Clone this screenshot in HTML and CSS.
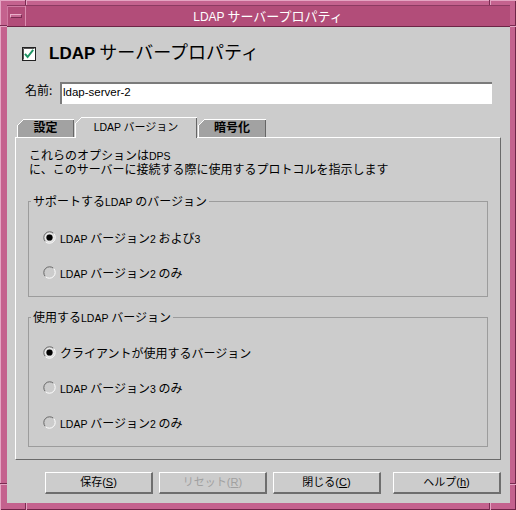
FILE: index.html
```html
<!DOCTYPE html>
<html lang="ja">
<head>
<meta charset="utf-8">
<title>LDAP サーバープロパティ</title>
<link rel="stylesheet" href="styles.css">
</head>
<body>
<div class="window">
  <div class="titlebar">
    <div class="menu-btn"><span class="menu-bar"></span></div>
    <div class="title"><span class="lat">LDAP</span> サーバープロパティ</div>
  </div>
  <div class="content">
    <div class="heading">
      <svg class="checkbox" width="14" height="14" viewBox="0 0 14 14">
        <rect x="0.5" y="0.5" width="13" height="13" fill="#fff" stroke="#222"/>
        <path d="M1.5 12.5V1.5H12.5" fill="none" stroke="#555"/>
        <path d="M3 6.8L5.6 10L11.2 2.8" fill="none" stroke="#1e9464" stroke-width="2"/>
      </svg>
      <h1><span class="hlat">LDAP</span> サーバープロパティ</h1>
    </div>
    <div class="name-row">
      <label class="name-label">名前:</label>
      <div class="field">ldap-server-2</div>
    </div>
    <div class="tabs">
      <div class="tab t1">設定</div>
      <div class="tab t2 active"><span class="lat">LDAP</span> バージョン</div>
      <div class="tab t3">暗号化</div>
    </div>
    <div class="panel">
      <div class="desc">
        <div class="desc-line">これらのオプションは<span class="lat">DPS</span></div>
        <div class="desc-line">に、このサーバーに接続する際に使用するプロトコルを指示します</div>
      </div>
      <fieldset class="group g1">
        <legend>サポートする<span class="lat">LDAP</span> のバージョン</legend>
        <div class="radio-row">
          <svg class="radio" width="13" height="13" viewBox="0 0 13 13"><path d="M2.4 10.6A5.8 5.8 0 0 1 10.6 2.4" fill="none" stroke="#666"/><path d="M10.6 2.4A5.8 5.8 0 0 1 2.4 10.6" fill="none" stroke="#fff"/><circle cx="6.5" cy="6.5" r="4.3" fill="none" stroke="#f2f2f2"/><circle cx="6.5" cy="6.5" r="3.1" fill="#000"/></svg>
          <span><span class="lat">LDAP</span> バージョン<span class="lat">2</span> および<span class="lat">3</span></span>
        </div>
        <div class="radio-row">
          <svg class="radio" width="13" height="13" viewBox="0 0 13 13"><path d="M2.4 10.6A5.8 5.8 0 0 1 10.6 2.4" fill="none" stroke="#666"/><path d="M10.6 2.4A5.8 5.8 0 0 1 2.4 10.6" fill="none" stroke="#fff"/></svg>
          <span><span class="lat">LDAP</span> バージョン<span class="lat">2</span> のみ</span>
        </div>
      </fieldset>
      <fieldset class="group g2">
        <legend>使用する<span class="lat">LDAP</span> バージョン</legend>
        <div class="radio-row">
          <svg class="radio" width="13" height="13" viewBox="0 0 13 13"><path d="M2.4 10.6A5.8 5.8 0 0 1 10.6 2.4" fill="none" stroke="#666"/><path d="M10.6 2.4A5.8 5.8 0 0 1 2.4 10.6" fill="none" stroke="#fff"/><circle cx="6.5" cy="6.5" r="4.3" fill="none" stroke="#f2f2f2"/><circle cx="6.5" cy="6.5" r="3.1" fill="#000"/></svg>
          <span>クライアントが使用するバージョン</span>
        </div>
        <div class="radio-row">
          <svg class="radio" width="13" height="13" viewBox="0 0 13 13"><path d="M2.4 10.6A5.8 5.8 0 0 1 10.6 2.4" fill="none" stroke="#666"/><path d="M10.6 2.4A5.8 5.8 0 0 1 2.4 10.6" fill="none" stroke="#fff"/></svg>
          <span><span class="lat">LDAP</span> バージョン<span class="lat">3</span> のみ</span>
        </div>
        <div class="radio-row">
          <svg class="radio" width="13" height="13" viewBox="0 0 13 13"><path d="M2.4 10.6A5.8 5.8 0 0 1 10.6 2.4" fill="none" stroke="#666"/><path d="M10.6 2.4A5.8 5.8 0 0 1 2.4 10.6" fill="none" stroke="#fff"/></svg>
          <span><span class="lat">LDAP</span> バージョン<span class="lat">2</span> のみ</span>
        </div>
      </fieldset>
    </div>
    <div class="buttons">
      <div class="btn">保存<span class="mn">(<u>S</u>)</span></div>
      <div class="btn disabled">リセット<span class="mn">(<u>R</u>)</span></div>
      <div class="btn">閉じる<span class="mn">(<u>C</u>)</span></div>
      <div class="btn help">ヘルプ<span class="mn">(<u>h</u>)</span></div>
    </div>
  </div>
  <span class="notch nv n1"></span>
  <span class="notch nv n2"></span>
  <span class="notch nh n3"></span>
  <span class="notch nh n4"></span>
  <span class="notch nh n5"></span>
  <span class="notch nh n6"></span>
  <span class="notch nv n7"></span>
  <span class="notch nv n8"></span>
</div>
</body>
</html>
```
FILE: styles.css
```css
* { box-sizing: border-box; }
html, body { margin: 0; padding: 0; }
body {
  width: 516px;
  height: 510px;
  overflow: hidden;
  background: #c4628e;
  font-family: "Noto Sans CJK JP", "Liberation Sans", sans-serif;
  font-size: 12px;
  line-height: 16px;
  color: #000;
}
.lat {
  font-family: "Liberation Sans", "Noto Sans CJK JP", sans-serif;
  font-size: 10.5px;
  line-height: 1;
}
.window {
  position: relative;
  width: 516px;
  height: 510px;
  padding: 5px 6px 7px 7px;
  display: flex;
  flex-direction: column;
  background: #c4628e;
  box-shadow: inset 1px 1px 0 #e4a4c2, inset -1px -1px 0 #6f2548;
}
.titlebar {
  flex: none;
  height: 22px;
  display: flex;
  background: #b24d79;
  border-top: 1px solid #8d3a62;
  border-bottom: 1px solid #6d2446;
}
.menu-btn {
  width: 19px;
  display: flex;
  align-items: center;
  justify-content: center;
  border-right: 1px solid #d98daf;
  box-shadow: inset 1px 1px 0 #cf7aa1;
}
.menu-bar {
  width: 12px;
  height: 4px;
  background: #c56892;
  border-style: solid;
  border-width: 1px;
  border-color: #eab0ca #7a2c52 #7a2c52 #eab0ca;
}
.title {
  flex: 1;
  text-align: center;
  color: #fff;
  font-size: 13px;
  line-height: 20px;
}
.title .lat { font-size: 12px; }
.content {
  flex: 1;
  background: #cccccc;
  padding: 0 9px 0 8px;
  display: flex;
  flex-direction: column;
}
.heading {
  flex: none;
  margin-top: 13px;
  height: 22px;
  display: flex;
  align-items: flex-start;
  padding-left: 7px;
}
.checkbox {
  flex: none;
  margin-top: 7px;
  margin-right: 13px;
}
.heading h1 {
  margin: 0;
  font-size: 18px;
  font-weight: normal;
  line-height: 22px;
  white-space: nowrap;
}
.hlat {
  font-family: "Liberation Sans", sans-serif;
  font-weight: bold;
  font-size: 17px;
  line-height: 1;
}
.name-row {
  flex: none;
  margin-top: 20px;
  height: 22px;
  display: flex;
  align-items: flex-start;
}
.name-label {
  width: 35px;
  margin-left: 10px;
  font-size: 12px;
  line-height: 16px;
}
.field {
  width: 432px;
  height: 22px;
  background: #fff;
  border-top: 2px solid #7b7b7b;
  border-left: 2px solid #7b7b7b;
  padding-left: 1px;
  font-family: "Liberation Sans", sans-serif;
  font-size: 11.5px;
  line-height: 16px;
}
.tabs {
  flex: none;
  margin-top: 13px;
  height: 20px;
  display: flex;
  align-items: flex-end;
  padding-left: 2px;
}
.tab {
  flex: none;
  height: 18px;
  margin-right: 1px;
  text-align: center;
  font-size: 12px;
  font-weight: bold;
  line-height: 16px;
  white-space: nowrap;
  background:
    linear-gradient(135deg, #cccccc 0 4.5px, #ffffff 4.5px 5.5px, transparent 5.5px) 0 0 / 10px 10px no-repeat,
    linear-gradient(#ffffff, #ffffff) 0 0 / 100% 1px no-repeat,
    linear-gradient(#ffffff, #ffffff) 0 0 / 1px 100% no-repeat,
    linear-gradient(#666666, #666666) 100% 0 / 1px 100% no-repeat,
    #a2a2a2;
}
.t1 { width: 57px; }
.t2 { width: 122px; }
.t3 { width: 68px; }
.tab.active {
  height: 21px;
  margin-bottom: -1px;
  position: relative;
  z-index: 1;
  font-size: 11px;
  font-weight: normal;
  line-height: 19px;
  background-color: #cccccc;
}
.panel {
  flex: none;
  height: 323px;
  border: 1px solid;
  border-color: #ffffff #6b6b6b #6b6b6b #ffffff;
  padding: 11px 12px 0;
}
.desc {
  margin: 0 0 0 1px;
  white-space: nowrap;
  font-family: "Liberation Sans", "Noto Sans CJK JP", sans-serif;
}
.desc-line {
  height: 14px;
  line-height: 14px;
}
.group {
  margin: 16px 0 0;
  padding: 11px 0 6px 2px;
  border: 1px solid #9c9c9c;
  min-width: 0;
}
.group.g2 {
  margin-top: 12px;
  padding-top: 10px;
}
.group legend {
  padding: 0 2px;
  line-height: 16px;
}
.radio-row {
  height: 35px;
  display: flex;
  align-items: center;
  padding-left: 12px;
  white-space: nowrap;
}
.radio {
  flex: none;
  margin-right: 4px;
}
.buttons {
  flex: none;
  margin-top: 12px;
  height: 22px;
  display: flex;
  padding-left: 30px;
}
.btn {
  flex: none;
  width: 108px;
  height: 22px;
  margin-right: 6px;
  border-style: solid;
  border-width: 1px 2px 2px 1px;
  border-color: #ffffff #6e6e6e #6e6e6e #ffffff;
  background: #cccccc;
  text-align: center;
  font-size: 11px;
  line-height: 16px;
  white-space: nowrap;
}
.btn.help { margin-left: 6px; margin-right: 0; }
.btn.disabled { color: #a0a0a0; }
.mn {
  font-family: "Liberation Sans", sans-serif;
  font-size: 11px;
  line-height: 1;
}
.notch { position: absolute; }
.nv {
  width: 2px;
  border-left: 1px solid #7a2c52;
  border-right: 1px solid #e4a4c2;
}
.nh {
  height: 2px;
  border-top: 1px solid #7a2c52;
  border-bottom: 1px solid #e4a4c2;
}
.n1 { left: 25px; top: 0; height: 5px; }
.n2 { left: 489px; top: 0; height: 5px; }
.n3 { left: 0; top: 25px; width: 7px; }
.n4 { right: 0; top: 25px; width: 6px; }
.n5 { left: 0; top: 483px; width: 7px; }
.n6 { right: 0; top: 483px; width: 6px; }
.n7 { left: 25px; bottom: 0; height: 7px; }
.n8 { left: 489px; bottom: 0; height: 7px; }
```
